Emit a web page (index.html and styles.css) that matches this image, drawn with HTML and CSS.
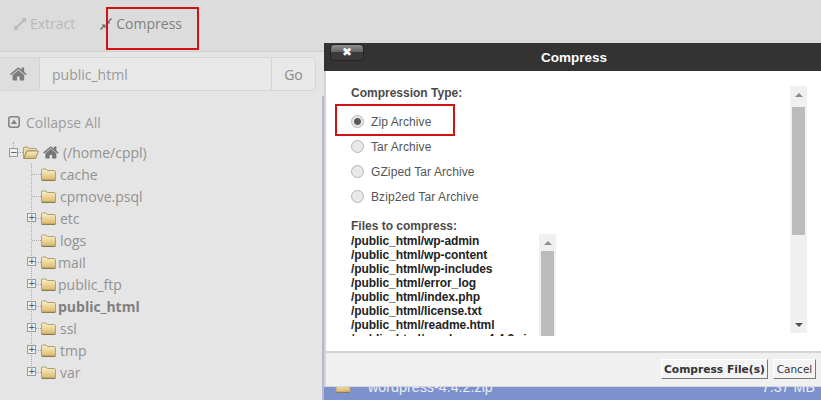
FILE: index.html
```html
<!DOCTYPE html>
<html lang="en">
<head>
<meta charset="utf-8">
<title>Compress</title>
<link rel="stylesheet" href="styles.css">
</head>
<body>
<svg class="defs" width="0" height="0" aria-hidden="true">
  <defs>
    <linearGradient id="fg" x1="0" y1="0" x2="0" y2="1">
      <stop offset="0" stop-color="#fbf2c8"/>
      <stop offset="1" stop-color="#d9b566"/>
    </linearGradient>
    <symbol id="folder" viewBox="0 0 15 13">
      <path d="M0.500 12V2.200Q0.500 1 1.700 1H5L6.200 2.500H13.300Q14.500 2.500 14.500 3.700V12Q14.500 12.700 13.800 12.700H1.200Q0.500 12.700 0.500 12Z" fill="url(#fg)" stroke="#ad9f80" stroke-width="1"/>
      <path d="M1 12.300H14" stroke="#7d6f50" stroke-width="1"/>
    </symbol>
    <symbol id="folder-open" viewBox="0 0 16 13">
      <path d="M0.500 12V2Q0.500 1 1.500 1H5L6.200 2.400H12.500Q13.500 2.400 13.500 3.400V5H4L0.800 12.300Z" fill="#e9d8a0" stroke="#ad9f80" stroke-width="1"/>
      <path d="M0.800 12.500L4 5H15.500L12.500 12.500Z" fill="url(#fg)" stroke="#a08e68" stroke-width="1"/>
    </symbol>
    <symbol id="home" viewBox="0 0 1792 1792">
      <path d="M1408 992v480q0 26-19 45t-45 19h-384v-384h-256v384h-384q-26 0-45-19t-19-45v-480q0-1 .5-3t.5-3l575-474 575 474q1 2 1 6zm223-69l-62 74q-8 9-21 11h-3q-13 0-21-7l-692-577-692 577q-12 8-24 7-13-2-21-11l-62-74q-8-10-7-23.500t11-21.500l719-599q32-26 76-26t76 26l244 204v-195q0-14 9-23t23-9h192q14 0 23 9t9 23v408l219 182q10 8 11 21.500t-7 23.500z" fill="currentColor"/>
    </symbol>
  </defs>
</svg>

<div class="page">
  <header class="toolbar">
    <span class="tool tool-off">
      <svg class="tool-icon" viewBox="0 0 12 12"><path d="M7.500 0H12V4.500L10.400 2.900 2.900 10.400 4.500 12H0V7.500L1.600 9.100 9.100 1.600Z" fill="currentColor"/></svg>
      Extract
    </span>
    <span class="tool tool-on">
      <svg class="tool-icon" viewBox="0 0 12 12"><path d="M11 0L12 1 9 4 10.500 5.500H6.500V1.500L8 3ZM1.500 6.500H5.500V10.500L4 9 1 12 0 11 3 8Z" fill="currentColor"/></svg>
      Compress
    </span>
    <span class="mark mark-tool"></span>
  </header>

  <div class="main">
    <aside class="side">
      <form class="path-bar">
        <span class="path-home"><svg class="path-home-icon"><use href="#home"/></svg></span>
        <span class="path-input">public_html</span>
        <span class="path-go">Go</span>
      </form>
      <div class="collapse">
        <svg class="collapse-icon" viewBox="0 0 12 12"><rect x="0.800" y="0.800" width="10.400" height="10.400" rx="2.500" fill="none" stroke="currentColor" stroke-width="1.600"/><path d="M6 3.500L9 8H3Z" fill="currentColor"/></svg>
        Collapse All
      </div>
      <div class="tree">
        <div class="root">
          <span class="stub"></span>
          <span class="box box-root">&minus;</span>
          <span class="dots dots-root"></span>
          <svg class="folder folder-root"><use href="#folder-open"/></svg>
          <svg class="root-home"><use href="#home"/></svg>
          <span>(/home/cppl)</span>
        </div>
        <ul class="kids">
          <li class="kid"><span class="dots"></span><svg class="folder"><use href="#folder"/></svg><span class="name">cache</span></li>
          <li class="kid"><span class="dots"></span><svg class="folder"><use href="#folder"/></svg><span class="name">cpmove.psql</span></li>
          <li class="kid"><span class="box">+</span><span class="dots"></span><svg class="folder"><use href="#folder"/></svg><span class="name">etc</span></li>
          <li class="kid"><span class="dots"></span><svg class="folder"><use href="#folder"/></svg><span class="name">logs</span></li>
          <li class="kid"><span class="box">+</span><span class="dots"></span><svg class="folder"><use href="#folder"/></svg><span class="name name-near">mail</span></li>
          <li class="kid"><span class="box">+</span><span class="dots"></span><svg class="folder"><use href="#folder"/></svg><span class="name name-near">public_ftp</span></li>
          <li class="kid"><span class="box">+</span><span class="dots"></span><svg class="folder"><use href="#folder"/></svg><span class="name name-near name-bold">public_html</span></li>
          <li class="kid"><span class="box">+</span><span class="dots"></span><svg class="folder"><use href="#folder"/></svg><span class="name">ssl</span></li>
          <li class="kid"><span class="box">+</span><span class="dots"></span><svg class="folder"><use href="#folder"/></svg><span class="name">tmp</span></li>
          <li class="kid"><span class="box">+</span><span class="dots"></span><svg class="folder"><use href="#folder"/></svg><span class="name">var</span></li>
        </ul>
      </div>
    </aside>
    <section class="files">
      <div class="file-row">
        <svg class="file-icon"><use href="#folder"/></svg>
        <span class="file-name">wordpress-4.4.2.zip</span>
        <span class="file-size">7.37 MB</span>
      </div>
    </section>
  </div>

  <div class="dialog">
    <div class="dialog-head">
      <button class="dialog-close" type="button">&#10006;</button>
      <span class="dialog-title">Compress</span>
    </div>
    <div class="dialog-body">
      <div class="dialog-content">
        <div class="label">Compression Type:</div>
        <div class="radios">
          <div class="radio-row"><span class="radio radio-on"></span>Zip Archive</div>
          <div class="radio-row"><span class="radio"></span>Tar Archive</div>
          <div class="radio-row"><span class="radio"></span>GZiped Tar Archive</div>
          <div class="radio-row"><span class="radio"></span>Bzip2ed Tar Archive</div>
        </div>
        <div class="label">Files to compress:</div>
        <div class="list">
          <div class="list-lines">
            <div>/public_html/wp-admin</div>
            <div>/public_html/wp-content</div>
            <div>/public_html/wp-includes</div>
            <div>/public_html/error_log</div>
            <div>/public_html/index.php</div>
            <div>/public_html/license.txt</div>
            <div>/public_html/readme.html</div>
            <div>/public_html/wordpress-4.4.2.zip</div>
          </div>
          <div class="bar bar-list">
            <span class="arrow arrow-up"></span>
            <span class="thumb thumb-list"></span>
          </div>
        </div>
      </div>
      <div class="bar bar-main">
        <span class="arrow arrow-up"></span>
        <span class="thumb thumb-main"></span>
        <span class="arrow arrow-down"></span>
      </div>
      <span class="mark mark-zip"></span>
    </div>
    <div class="dialog-foot">
      <button class="btn btn-main" type="button">Compress File(s)</button>
      <button class="btn btn-alt" type="button">Cancel</button>
    </div>
  </div>
</div>
</body>
</html>
```
FILE: styles.css
```css
* { box-sizing: border-box; }
html, body { margin: 0; padding: 0; }
body { width: 821px; height: 400px; overflow: hidden; background: #e5e5e5; font-family: "Open Sans", sans-serif; }
.defs { display: block; height: 0; }
.page { position: relative; width: 821px; height: 400px; overflow: hidden; display: flex; flex-direction: column; }

.toolbar { position: relative; flex: none; height: 52px; background: #dcdcdc; border-bottom: 1px solid #d0d0d0; display: flex; align-items: center; padding: 0 0 4px 14px; gap: 25px; font-size: 14px; }
.tool { display: flex; align-items: center; gap: 4px; }
.tool-icon { width: 12px; height: 12px; }
.tool-off { color: #b9b9b9; }
.tool-on { color: #7f7f7f; }
.tool-on .tool-icon { color: #6a6a6a; }
.mark { position: absolute; border: 2px solid #d01116; }
.mark-tool { left: 106px; top: 7px; width: 93px; height: 43px; }

.main { flex: 1; display: flex; min-height: 0; }
.side { flex: none; width: 322px; padding-top: 5px; }
.path-bar { display: flex; width: 316px; height: 34px; border: 1px solid #d6d6d6; border-left: 0; border-radius: 0 4px 4px 0; background: #e8e8e8; font-size: 14px; color: #9a9a9a; }
.path-home { flex: none; width: 40px; background: #dedede; border-right: 1px solid #d3d3d3; display: flex; align-items: center; padding-left: 10px; color: #7d7d7d; }
.path-home-icon { width: 18px; height: 18px; }
.path-input { flex: 1; display: flex; align-items: center; padding-left: 12px; }
.path-go { flex: none; width: 44px; border-left: 1px solid #d3d3d3; display: flex; align-items: center; justify-content: center; color: #8a8a8a; }

.collapse { display: flex; align-items: center; gap: 6px; margin: 21px 0 0 8px; height: 20px; font-size: 14px; color: #9c9c9c; }
.collapse-icon { width: 12px; height: 12px; color: #848484; }

.tree { margin-top: 9px; font-size: 14px; color: #929292; }
.root { position: relative; display: flex; align-items: center; height: 22px; padding-left: 23px; }
.folder { width: 15px; height: 13px; flex: none; }
.folder-root { width: 16px; height: 13px; }
.root-home { width: 17px; height: 17px; margin: 0 3px 0 4px; color: #777; }
.box { position: absolute; left: -5px; top: 6px; width: 9px; height: 9px; border: 1px solid #9a9a9a; background: #efefef; font: 9px/7px "DejaVu Sans", sans-serif; color: #444; text-align: center; }
.box-root { left: 9px; top: 7px; }
.stub { position: absolute; left: 13px; top: 1px; height: 6px; border-left: 1px dotted #aaa; }
.dots { flex: none; width: 9px; border-top: 1px dotted #aaa; }
.dots-root { position: absolute; left: 18px; top: 11px; width: 5px; }
.kids { list-style: none; margin: 0 0 0 31px; padding: 0; border-left: 1px dotted #aaa; height: 207px; }
.kid { position: relative; display: flex; align-items: center; height: 22px; }
.name { margin-left: 4px; }
.name-near { margin-left: 2px; }
.name-bold { font-weight: 700; color: #808080; }

.files { flex: 1; margin-top: 44px; display: flex; flex-direction: column; justify-content: flex-end; border-left: 2px solid #b2b8d6; }
.file-row { height: 22px; background: #7d92cc; display: flex; align-items: center; padding: 0 6px 5px 10px; color: #e8edfa; font: 14.300px "Liberation Sans", sans-serif; }
.file-icon { width: 18px; height: 13px; }
.file-name { margin-left: 16px; flex: 1; }

.dialog { position: absolute; left: 324px; top: 43px; width: 497px; height: 344px; background: #fff; display: flex; flex-direction: column; font-family: "Liberation Sans", sans-serif; border-bottom: 1px solid #d8d8d8; }
.dialog-head { position: relative; flex: none; height: 28px; background: #333; display: flex; align-items: center; justify-content: center; }
.dialog-close { position: absolute; left: 6px; top: 1px; width: 34px; height: 17px; padding: 0; border: 1px solid #242424; border-radius: 4px; background: linear-gradient(#8f8f8f, #666 45%, #3c3838 46%, #3c3838); color: #fff; font: 12px/15px "DejaVu Sans", sans-serif; }
.dialog-title { color: #fff; font-size: 13.500px; font-weight: 700; margin: 1px 0 0 3px; }
.dialog-body { position: relative; flex: none; height: 280px; display: flex; padding: 15px 14px 18px 25px; border-left: 2px solid #d4d4d4; }
.dialog-content { flex: 1; min-width: 0; }
.label { font-size: 12px; line-height: 14px; font-weight: 700; color: #4a4a4a; }
.radios { margin: 9px 0 10px; }
.radio-row { display: flex; align-items: center; height: 25px; font-size: 12px; letter-spacing: 0.100px; color: #555; }
.radio { width: 13px; height: 13px; margin-right: 7px; border-radius: 50%; border: 1px solid #b5b5b5; background: #e8e8e8; }
.radio-on { background: radial-gradient(circle, #5a5a5a 0 3px, #e8e8e8 4px); }
.list { display: flex; width: 205px; height: 102px; margin-top: 1px; overflow: hidden; }
.list-lines { flex: 1; min-width: 0; white-space: nowrap; overflow: hidden; font-size: 12px; line-height: 14px; font-weight: 700; letter-spacing: -0.080px; color: #222; }
.bar { flex: none; display: flex; flex-direction: column; align-items: center; background: #f0f0f0; }
.bar-main { width: 17px; height: 247px; }
.bar-list { width: 17px; height: 102px; }
.thumb { width: 13px; background: #bcbcbc; }
.thumb-main { height: 128px; margin-top: 4px; }
.thumb-list { flex: 1; }
.arrow { flex: none; width: 0; height: 0; border-left: 4px solid transparent; border-right: 4px solid transparent; }
.arrow-up { border-bottom: 4px solid #8c8c8c; margin-top: 7px; margin-bottom: 6px; }
.arrow-down { border-top: 4px solid #505050; margin-top: auto; margin-bottom: 6px; }
.mark-zip { left: 9px; top: 33px; width: 120px; height: 32px; }
.dialog-foot { flex: 1; background: #f0f0f0; border-top: 2px solid #d4d4d4; border-left: 2px solid #d4d4d4; display: flex; justify-content: flex-end; align-items: flex-start; gap: 5px; padding: 6px 5px 0 0; }
.btn { height: 20px; padding: 0; background: #f4f4f4; border: 1px solid; border-color: #fff #777 #777 #fff; font-family: "DejaVu Sans", sans-serif; font-size: 10.700px; color: #333; }
.btn-main { width: 107px; font-weight: 700; }
.btn-alt { width: 43px; font-size: 10.500px; }
```
